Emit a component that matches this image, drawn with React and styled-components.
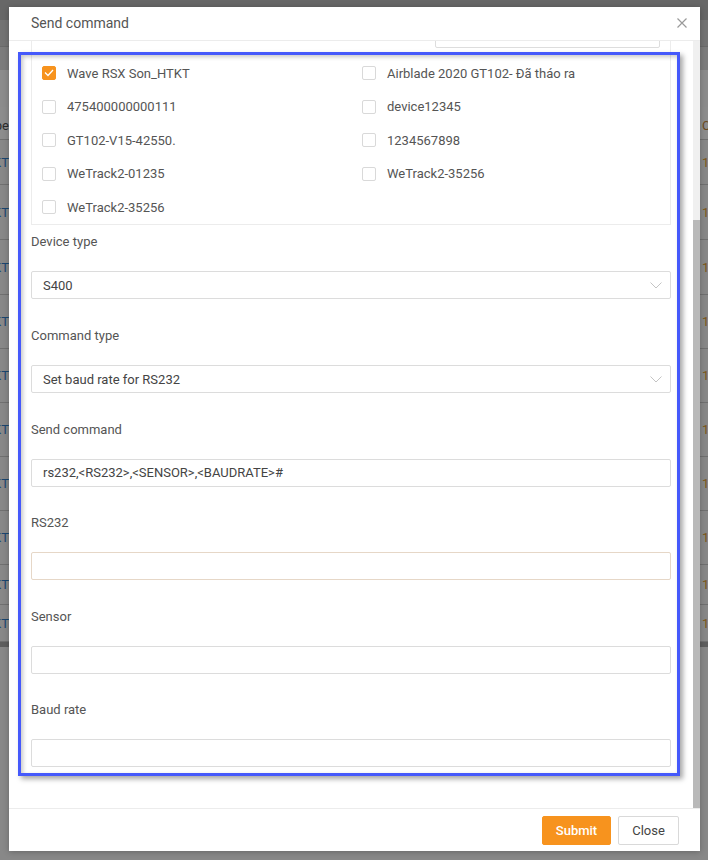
import React from 'react';
import styled, { createGlobalStyle } from 'styled-components';

const GlobalStyle = createGlobalStyle`
  * { box-sizing: border-box; }
  html, body { margin: 0; padding: 0; background: #878787; }
  body { font-family: Roboto, "Noto Sans", "Liberation Sans", sans-serif; }
`;

const Page = styled.div`
  position: relative;
  width: 708px;
  height: 860px;
  overflow: hidden;
  background: #888888;
  display: flex;
  flex-direction: column;
`;

const BgTopBar = styled.div`
  flex: none;
  height: 47px;
  background: linear-gradient(#676767 0 20px, #737373 20px);
  border-bottom: 1px solid #6a6a6a;
`;

const BgToolbar = styled.div`
  flex: none;
  height: 60px;
  background: linear-gradient(#7c7c7c 0 23px, #8c8c8c 23px);
`;

const BgRow = styled.div`
  flex: none;
  height: ${p => p.$h}px;
  display: flex;
  align-items: center;
  justify-content: space-between;
  border-bottom: 1px solid #707070;
  background: ${p => (p.$head ? '#8d8d8d' : '#888888')};
  font-size: 13px;
  padding-top: ${p => (p.$head ? 4 : 0)}px;
`;

const BgLeftCell = styled.div`
  width: 9px;
  overflow: hidden;
  display: flex;
  justify-content: flex-end;
  white-space: nowrap;
  color: ${p => (p.$head ? '#2b2b2b' : '#1b466f')};
`;

const BgRightCell = styled.div`
  width: 6px;
  overflow: hidden;
  white-space: nowrap;
  color: ${p => (p.$head ? '#6b4a1e' : '#7c5618')};
`;

const BgHScroll = styled.div`
  flex: none;
  height: 5px;
  background: #5e5e5e;
`;

const Modal = styled.div`
  position: absolute;
  left: 9px;
  top: 7px;
  width: 691px;
  height: 844px;
  background: #fff;
  display: flex;
  flex-direction: column;
  box-shadow: 0 1px 6px rgba(0, 0, 0, 0.25);
`;

const ModalHeader = styled.div`
  flex: none;
  height: 34px;
  padding: 6px 13px 0 22px;
  display: flex;
  justify-content: space-between;
  align-items: flex-start;
  border-bottom: 1px solid #ececec;
`;

const Title = styled.h2`
  margin: 0;
  font-size: 14px;
  font-weight: 400;
  line-height: 20px;
  color: #555;
`;

const CloseX = styled.button`
  border: 0;
  background: none;
  padding: 0;
  margin-top: 5px;
  width: 10px;
  height: 10px;
  display: flex;
  cursor: pointer;
`;

const ModalBody = styled.div`
  flex: 1;
  min-height: 0;
  display: flex;
`;

const Viewport = styled.div`
  flex: 1;
  min-width: 0;
  overflow: hidden;
  display: flex;
  flex-direction: column;
  justify-content: flex-end;
`;

const Content = styled.div`
  flex: none;
  padding: 15.8px 22px 40.6px;
  display: flex;
  flex-direction: column;
`;

const ScrollTrack = styled.div`
  flex: none;
  width: 7px;
  background: #f0f0f0;
  display: flex;
  flex-direction: column;
  justify-content: flex-end;
`;

const ScrollThumb = styled.div`
  height: 588px;
  background: #b9b9b9;
`;

const Field = styled.div`
  display: flex;
  flex-direction: column;
  &:not(:last-child) {
    margin-bottom: 26.6px;
  }
`;

const Label = styled.label`
  font-size: 13px;
  line-height: 19px;
  color: #555;
  margin-bottom: 20px;
`;

const SelectBox = styled.div`
  height: 28px;
  border: 1px solid #dcdcdc;
  border-radius: 2px;
  display: flex;
  align-items: center;
  justify-content: space-between;
  padding: 0 8px 0 11px;
  font-size: 13px;
  color: #444;
`;

const TextInput = styled.input`
  height: 28px;
  width: 100%;
  border: 1px solid ${p => (p.$warm ? '#e6d7c7' : '#dcdcdc')};
  border-radius: 2px;
  padding: 0 11px;
  font-family: Roboto, "Noto Sans", "Liberation Sans", sans-serif;
  font-size: 13px;
  color: #444;
  outline: none;
  background: #fff;
`;

const Panel = styled.div`
  border: 1px solid #ececec;
  margin-bottom: 7.6px;
`;

const PanelHeader = styled.div`
  display: flex;
  justify-content: space-between;
  align-items: center;
  padding: 8px 10px 8.25px 10px;
`;

const SearchInput = styled(TextInput)`
  width: 225px;
  border-color: #dddddd;
`;

const DeviceGrid = styled.div`
  display: grid;
  grid-template-columns: 320px 1fr;
  grid-auto-rows: 33.5px;
  padding-left: 10px;
`;

const DeviceItem = styled.label`
  display: flex;
  align-items: center;
  gap: 11px;
  font-size: 13px;
  color: #555;
  white-space: nowrap;
`;

const Box = styled.span`
  width: 14px;
  height: 14px;
  flex: none;
  border-radius: 2px;
  border: 1px solid ${p => (p.$checked ? '#f7931e' : '#d9d9d9')};
  background: ${p => (p.$checked ? '#f7931e' : '#fff')};
  display: flex;
  align-items: center;
  justify-content: center;
`;

const ModalFooter = styled.div`
  flex: none;
  height: 43px;
  border-top: 1px solid #ececec;
  display: flex;
  justify-content: flex-end;
  align-items: center;
  gap: 7px;
  padding: 0 21px;
`;

const Button = styled.button`
  height: 29px;
  width: ${p => p.$w}px;
  border-radius: 2px;
  font-family: Roboto, "Noto Sans", "Liberation Sans", sans-serif;
  font-size: 13px;
  cursor: pointer;
  border: 1px solid ${p => (p.$primary ? '#f7931e' : '#d9d9d9')};
  background: ${p => (p.$primary ? '#f7931e' : '#fff')};
  color: ${p => (p.$primary ? '#fff' : '#444')};
  font-weight: ${p => (p.$primary ? 500 : 400)};
  padding: 0;
`;

const Highlight = styled.div`
  position: absolute;
  left: 18px;
  top: 52px;
  width: 662px;
  height: 724px;
  border: 3px solid #4559fb;
  box-shadow: 3px 3px 5px rgba(0, 0, 0, 0.35), inset 2px 2px 4px rgba(0, 0, 0, 0.22);
  pointer-events: none;
`;

const Checkbox = ({ checked }) => (
  <Box $checked={checked}>
    {checked && (
      <svg width="10" height="8" viewBox="0 0 10 8">
        <polyline points="1,3.5 4,6.5 9,1" fill="none" stroke="#fff" strokeWidth="1.3" />
      </svg>
    )}
  </Box>
);

const Chevron = () => (
  <svg width="12" height="7" viewBox="0 0 12 7">
    <polyline points="0.5,0.5 6,6 11.5,0.5" fill="none" stroke="#c4c4c4" strokeWidth="1" />
  </svg>
);

const bgRows = [
  { h: 33, head: true, l: 'Type', r: 'Command' },
  { h: 45, l: 'HTKT', r: '12' },
  { h: 55, l: 'HTKT', r: '12' },
  { h: 55, l: 'HTKT', r: '12' },
  { h: 54, l: 'HTKT', r: '12' },
  { h: 54, l: 'HTKT', r: '12' },
  { h: 54, l: 'HTKT', r: '12' },
  { h: 54, l: 'HTKT', r: '12' },
  { h: 54, l: 'HTKT', r: '12' },
  { h: 40, l: 'HTKT', r: '12' },
  { h: 37, l: 'HTKT', r: '12' },
];

const devices = [
  { name: 'Wave RSX Son_HTKT', checked: true },
  { name: 'Airblade 2020 GT102- Đã tháo ra' },
  { name: '475400000000111' },
  { name: 'device12345' },
  { name: 'GT102-V15-42550.' },
  { name: '1234567898' },
  { name: 'WeTrack2-01235' },
  { name: 'WeTrack2-35256' },
  { name: 'WeTrack2-35256' },
];

export default function App() {
  return (
    <Page>
      <GlobalStyle />
      <BgTopBar />
      <BgToolbar />
      {bgRows.map((r, i) => (
        <BgRow key={i} $h={r.h} $head={r.head}>
          <BgLeftCell $head={r.head}>{r.l}</BgLeftCell>
          <BgRightCell $head={r.head}>{r.r}</BgRightCell>
        </BgRow>
      ))}
      <BgHScroll />

      <Modal>
        <ModalHeader>
          <Title>Send command</Title>
          <CloseX aria-label="Close">
            <svg width="10" height="10" viewBox="0 0 10 10">
              <path d="M0.5 0.5 L9.5 9.5 M9.5 0.5 L0.5 9.5" stroke="#9a9a9a" strokeWidth="1.2" />
            </svg>
          </CloseX>
        </ModalHeader>

        <ModalBody>
          <Viewport>
            <Content>
              <Field>
                <Label>Send type</Label>
                <SelectBox>
                  <span>Send now</span>
                  <Chevron />
                </SelectBox>
              </Field>
              <Field>
                <Label>Device group</Label>
                <SelectBox>
                  <span>All groups</span>
                  <Chevron />
                </SelectBox>
              </Field>

              <Panel>
                <PanelHeader>
                  <Checkbox />
                  <SearchInput placeholder="" readOnly />
                </PanelHeader>
                <DeviceGrid>
                  {devices.map((d, i) => (
                    <DeviceItem key={i}>
                      <Checkbox checked={d.checked} />
                      <span>{d.name}</span>
                    </DeviceItem>
                  ))}
                </DeviceGrid>
              </Panel>

              <Field>
                <Label>Device type</Label>
                <SelectBox>
                  <span>S400</span>
                  <Chevron />
                </SelectBox>
              </Field>
              <Field>
                <Label>Command type</Label>
                <SelectBox>
                  <span>Set baud rate for RS232</span>
                  <Chevron />
                </SelectBox>
              </Field>
              <Field>
                <Label>Send command</Label>
                <TextInput defaultValue="rs232,<RS232>,<SENSOR>,<BAUDRATE>#" />
              </Field>
              <Field>
                <Label>RS232</Label>
                <TextInput $warm defaultValue="" />
              </Field>
              <Field>
                <Label>Sensor</Label>
                <TextInput defaultValue="" />
              </Field>
              <Field>
                <Label>Baud rate</Label>
                <TextInput defaultValue="" />
              </Field>
            </Content>
          </Viewport>
          <ScrollTrack>
            <ScrollThumb />
          </ScrollTrack>
        </ModalBody>

        <ModalFooter>
          <Button $primary $w={69}>Submit</Button>
          <Button $w={61}>Close</Button>
        </ModalFooter>
      </Modal>

      <Highlight />
    </Page>
  );
}
